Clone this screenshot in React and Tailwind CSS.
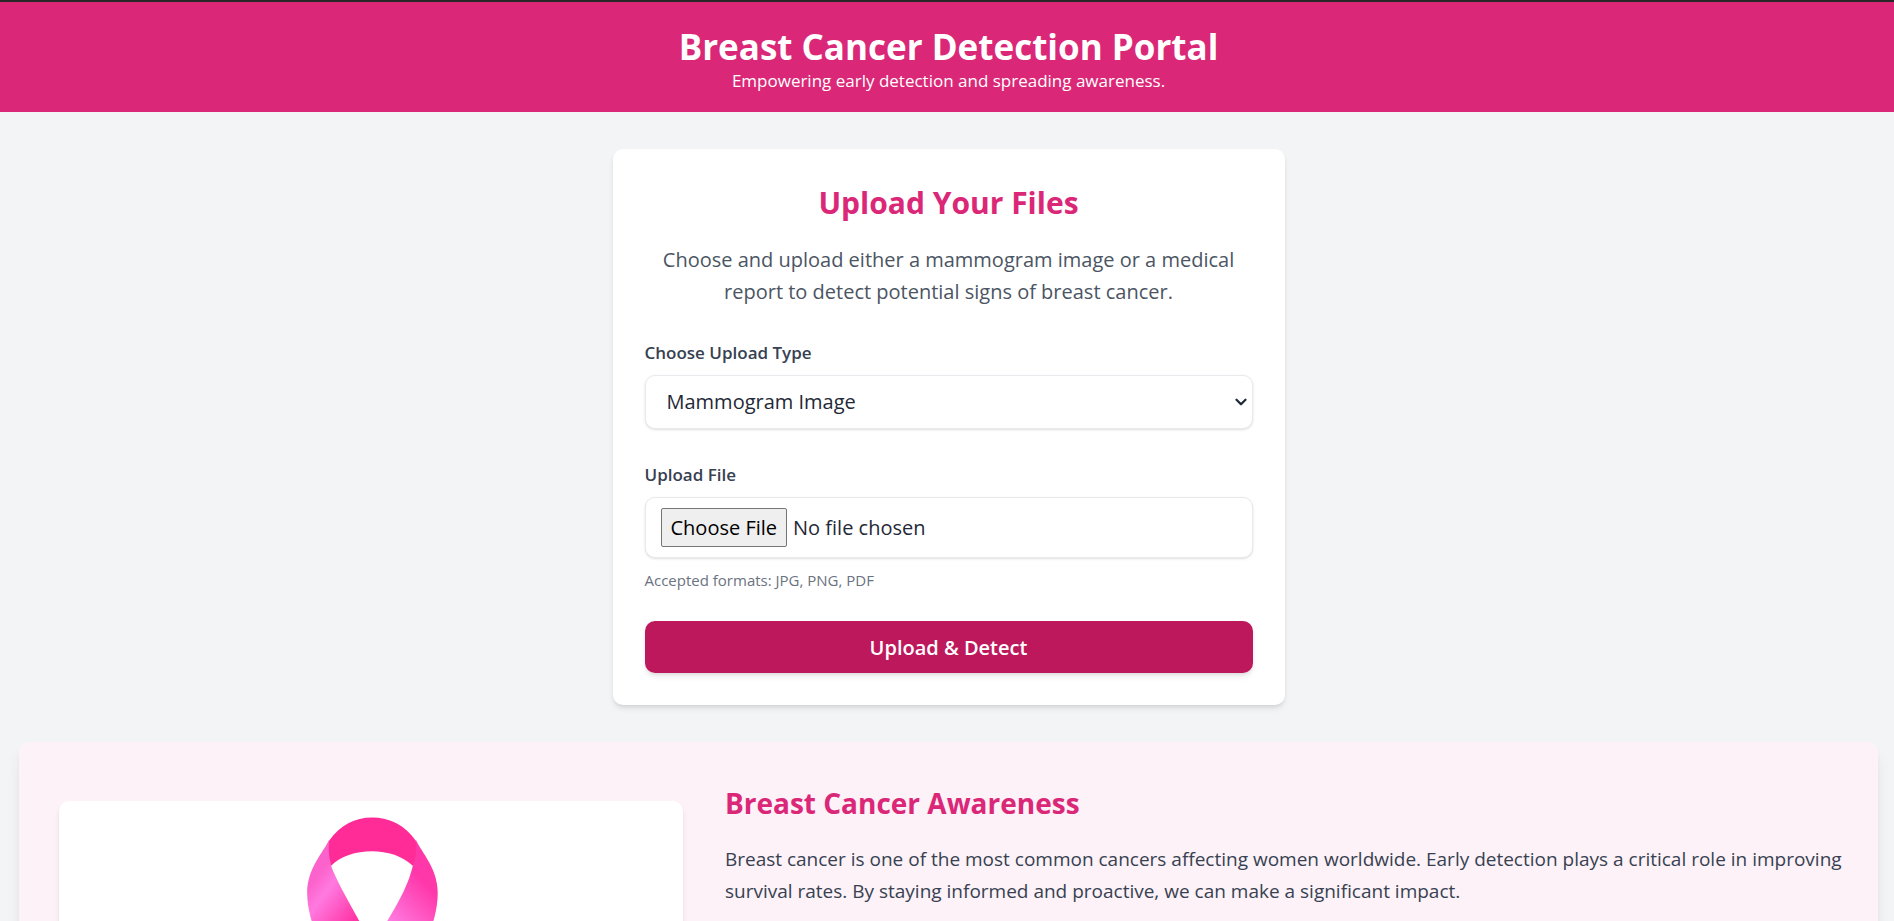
import React from "react";
import { ChevronDown } from "lucide-react";

function Ribbon() {
  return (
    <svg
      viewBox="0 0 626 360"
      className="block w-full"
      role="img"
      aria-label="Pink awareness ribbon"
    >
      <defs>
        <linearGradient id="left" gradientUnits="userSpaceOnUse" x1="254" y1="82" x2="298" y2="116">
          <stop offset="0" stopColor="#fc62cb" />
          <stop offset="0.3" stopColor="#ff7ae0" />
          <stop offset="1" stopColor="#ff36a6" />
        </linearGradient>
        <linearGradient id="right" gradientUnits="userSpaceOnUse" x1="336" y1="124" x2="372" y2="88">
          <stop offset="0" stopColor="#ff7ae0" />
          <stop offset="1" stopColor="#ff38aa" />
        </linearGradient>
      </defs>
      <path
        d="M358 39 C364 52 380 68 380 92 C380 145 331 200 263 345 L221 310 C263 210 301 150 329 121 C343 98 351 82 355 65 Z"
        fill="url(#right)"
      />
      <path
        d="M271 39 C265 52 249 68 249 92 C249 145 301 200 367 345 L409 310 C367 210 321 150 301 120 C289 98 278 79 273 65 Z"
        fill="url(#left)"
      />
      <path
        d="M271 40 C282 24 297 16.500 314 16.500 C332 16.500 347 24 358 40 C359 50 358 58 355 65 C335 45 291 46 273 65 C271 57 270 49 271 40 Z"
        fill="#ff2c98"
      />
    </svg>
  );
}

const fieldClass =
  "block w-full rounded-[10px] border border-[#e8eaed] bg-white text-[20px] text-[#1f2937] shadow-sm";
const labelClass = "mb-2 block text-[17px] leading-7 font-semibold text-[#374151]";

export default function App() {
  return (
    <div className="min-h-screen bg-[#f3f4f6] font-['Open_Sans','Noto_Sans',sans-serif]">
      <header className="border-t-2 border-[#27272a] bg-[#db2777] pt-[25px] pb-[17px] pl-[3px] text-center text-white">
        <h1 className="text-[35px] leading-10 font-bold">Breast Cancer Detection Portal</h1>
        <p className="text-[17px] leading-7">
          Empowering early detection and spreading awareness.
        </p>
      </header>

      <main className="pl-[3px]">
        <section className="mx-auto mt-[37px] max-w-2xl rounded-[10px] bg-white p-8 shadow-md">
          <h2 className="mt-1 text-center text-[30px] leading-9 font-bold text-[#db2777]">
            Upload Your Files
          </h2>
          <p className="mt-[23px] text-center text-[20px] leading-8 text-[#4b5563]">
            Choose and upload either a mammogram image or a medical report to detect potential signs
            of breast cancer.
          </p>
          <form className="mt-[31px]" onSubmit={(event) => event.preventDefault()}>
            <label htmlFor="upload-type" className={labelClass}>
              Choose Upload Type
            </label>
            <div className="relative">
              <select id="upload-type" className={`${fieldClass} h-[54px] appearance-none px-[21px]`}>
                <option>Mammogram Image</option>
                <option>Medical Report</option>
              </select>
              <ChevronDown
                aria-hidden="true"
                strokeWidth={3}
                className="pointer-events-none absolute inset-y-0 right-[3px] my-auto size-[18px] text-[#1f2937]"
              />
            </div>

            <label htmlFor="upload-file" className={`${labelClass} mt-8`}>
              Upload File
            </label>
            <input
              id="upload-file"
              type="file"
              accept=".jpg,.png,.pdf"
              className={`${fieldClass} px-[15px] py-[10px] file:mr-[6px] file:h-[39px] file:rounded-[2px] file:border file:border-solid file:border-[#767676] file:bg-[#efefef] file:px-[9px] file:text-black`}
            />
            <p className="mt-2 text-[15px] leading-7 text-[#6b7280]">
              Accepted formats: JPG, PNG, PDF
            </p>
            <button
              type="submit"
              className="mt-[27px] block h-[52px] w-full rounded-[10px] bg-[#be185d] pt-px text-[20px] font-semibold text-white shadow-md"
            >
              Upload &amp; Detect
            </button>
          </form>
        </section>

        <section className="mx-4 mt-[37px] grid grid-cols-[5fr_9fr] items-start gap-[42px] rounded-[10px] bg-[#fdf2f8] py-10 pr-[30px] pl-10 shadow-lg">
          <div className="mt-[19px] overflow-hidden rounded-[10px] bg-white shadow-md">
            <Ribbon />
          </div>
          <div>
            <h2 className="text-[28px] leading-[42px] font-bold text-[#db2777]">
              Breast Cancer Awareness
            </h2>
            <p className="mt-[19px] text-[19px] leading-8 text-[#374151]">
              Breast cancer is one of the most common cancers affecting women worldwide. Early
              detection plays a critical role in improving survival rates. By staying informed and
              proactive, we can make a significant impact.
            </p>
          </div>
        </section>
      </main>
    </div>
  );
}
